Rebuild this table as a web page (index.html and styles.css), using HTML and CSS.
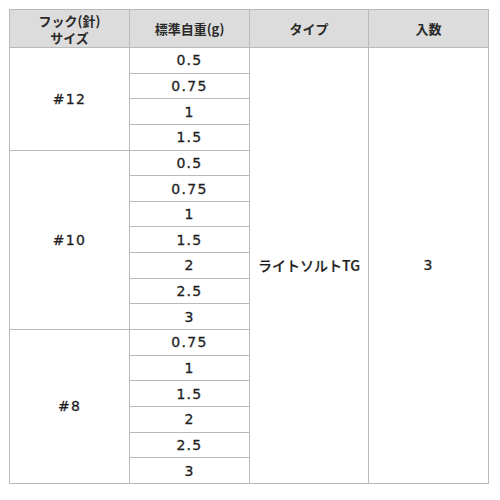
FILE: index.html
```html
<!DOCTYPE html>
<html lang="ja">
<head>
<meta charset="utf-8">
<link rel="stylesheet" href="styles.css">
</head>
<body>
<table class="spec">
  <thead>
    <tr>
      <th class="c1">フック(針)<br>サイズ</th>
      <th class="c2">標準自重(g)</th>
      <th class="c3">タイプ</th>
      <th class="c4">入数</th>
    </tr>
  </thead>
  <tbody>
    <tr><td class="size" rowspan="4">#12</td><td class="num">0.5</td><td class="type" rowspan="17">ライトソルトTG</td><td class="num" rowspan="17">3</td></tr>
    <tr><td class="num">0.75</td></tr>
    <tr><td class="num">1</td></tr>
    <tr><td class="num">1.5</td></tr>
    <tr><td class="size" rowspan="7">#10</td><td class="num">0.5</td></tr>
    <tr><td class="num">0.75</td></tr>
    <tr><td class="num">1</td></tr>
    <tr><td class="num">1.5</td></tr>
    <tr><td class="num">2</td></tr>
    <tr><td class="num">2.5</td></tr>
    <tr><td class="num">3</td></tr>
    <tr><td class="size" rowspan="6">#8</td><td class="num">0.75</td></tr>
    <tr><td class="num">1</td></tr>
    <tr><td class="num">1.5</td></tr>
    <tr><td class="num">2</td></tr>
    <tr><td class="num">2.5</td></tr>
    <tr><td class="num">3</td></tr>
  </tbody>
</table>
</body>
</html>
```
FILE: styles.css
```css
html, body {
  margin: 0;
  padding: 0;
  background: #ffffff;
}
body {
  padding: 9px 0 0 9px;
}
.spec {
  border-collapse: collapse;
  table-layout: fixed;
  width: 479px;
  color: #1e1e1e;
  font-family: "DejaVu Sans", "Noto Sans CJK JP", sans-serif;
}
.spec th, .spec td {
  border: 1px solid #bababa;
  padding: 0;
  text-align: center;
  vertical-align: middle;
}
.spec th {
  background: #dcdcdc;
  height: 37px;
  font-family: "Noto Sans CJK JP", sans-serif;
  font-weight: 700;
  font-size: 13px;
  line-height: 17px;
  color: #2a2a2a;
}
.c1 { width: 119px; }
.c2 { width: 119px; }
.c3 { width: 118px; }
.c4 { width: 119px; }
.spec tbody tr {
  height: 25.65px;
}
.num, .size {
  font-size: 14px;
  letter-spacing: 1.3px;
  line-height: 16px;
  -webkit-text-stroke: 0.3px #1e1e1e;
}
.type {
  font-family: "Noto Sans CJK JP", sans-serif;
  font-size: 14px;
  font-weight: 500;
  -webkit-text-stroke: 0.2px #1e1e1e;
}
```
